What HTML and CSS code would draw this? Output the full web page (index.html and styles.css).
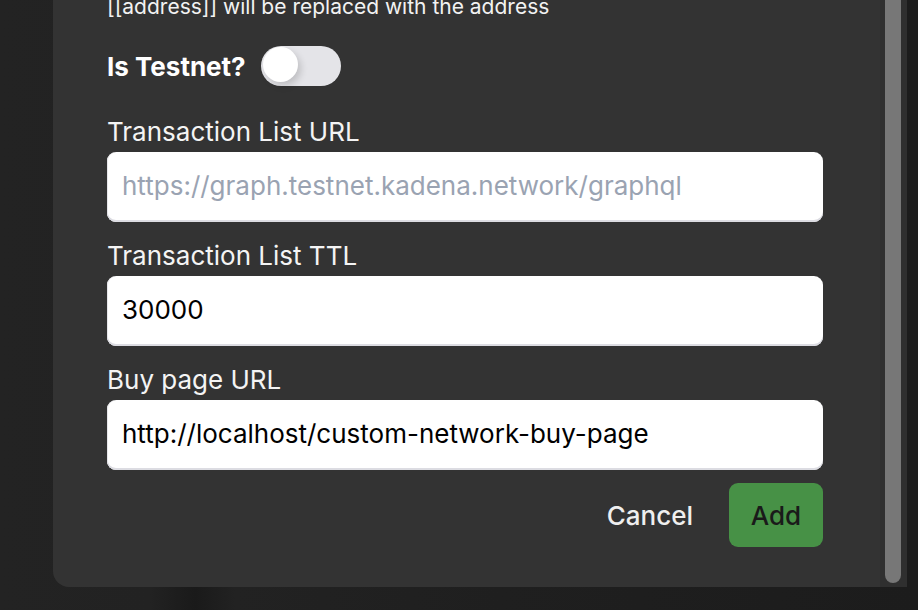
FILE: index.html
```html
<!DOCTYPE html>
<html lang="en">
<head>
<meta charset="utf-8">
<title>Add network</title>
<link rel="stylesheet" href="styles.css">
</head>
<body>
<div class="backdrop">
  <div class="modal">
    <form class="content">
      <p class="hint">[[address]] will be replaced with the address</p>
      <div class="toggle-row">
        <span class="toggle-label">Is Testnet?</span>
        <span class="switch"><span class="knob"></span></span>
      </div>
      <label class="field">
        <span class="label">Transaction List URL</span>
        <input class="input" type="text" placeholder="https://graph.testnet.kadena.network/graphql">
      </label>
      <label class="field">
        <span class="label">Transaction List TTL</span>
        <input class="input" type="text" value="30000">
      </label>
      <label class="field">
        <span class="label">Buy page URL</span>
        <input class="input" type="text" value="http://localhost/custom-network-buy-page">
      </label>
      <div class="actions">
        <button type="button" class="btn-cancel">Cancel</button>
        <button type="button" class="btn-add">Add</button>
      </div>
    </form>
    <div class="scrolltrack"><div class="thumb"></div></div>
  </div>
</div>
</body>
</html>
```
FILE: styles.css
```css
* { box-sizing: border-box; }
html, body {
  margin: 0;
  height: 610px;
  overflow: hidden;
  background: #1f1f1f;
  font-family: Inter, "Noto Sans", "Liberation Sans", sans-serif;
}
.backdrop {
  height: 610px;
  display: flex;
  align-items: flex-start;
  background: linear-gradient(to right, #232323 0, #222 150px, #1a1a1a 195px, #222 235px, #1f1f1f 500px, #1c1c1c 918px);
}
.modal {
  margin-left: 53px;
  margin-top: -7px;
  width: 854px;
  height: 594px;
  background: #333;
  border-bottom-left-radius: 16px;
  display: flex;
}
.content {
  flex: 1;
  padding: 0 57px 0 54px;
  display: flex;
  flex-direction: column;
  margin: 0;
}
.hint {
  margin: 0;
  color: #f2f2f2;
  font-size: 21px;
  line-height: 28px;
  white-space: nowrap;
}
.toggle-row {
  margin-top: 25px;
  display: flex;
  align-items: center;
  gap: 15px;
  height: 40px;
}
.toggle-label {
  color: #fff;
  font-weight: 700;
  font-size: 26px;
}
.switch {
  width: 80px;
  height: 40px;
  border-radius: 20px;
  background: #e4e4e8;
  padding: 1px 2px;
  display: flex;
}
.knob {
  width: 35px;
  height: 35px;
  border-radius: 50%;
  background: #fff;
  box-shadow: 3px 4px 7px rgba(0,0,0,0.16);
}
.field {
  display: flex;
  flex-direction: column;
  margin-top: 19px;
}
.toggle-row + .field { margin-top: 31px; }
.label {
  color: #f4f4f4;
  font-size: 26px;
  line-height: 30px;
  margin-bottom: 5px;
}
.input {
  height: 70px;
  border: none;
  border-radius: 9px;
  box-shadow: inset 0 -2px 0 #dcdce2, inset 1px 0 0 #e6e6ea;
  background: #fff;
  padding: 0 15px 3px;
  font-family: Inter, "Noto Sans", sans-serif;
  font-size: 26px;
  color: #000;
  outline: none;
}
.input::placeholder { color: #9aa3b2; }
.actions {
  margin-top: 13px;
  display: flex;
  justify-content: flex-end;
  align-items: center;
  gap: 20px;
}
.btn-cancel, .btn-add {
  font-family: Inter, "Noto Sans", sans-serif;
  font-size: 26px;
  font-weight: 500;
  border: none;
  height: 64px;
  cursor: pointer;
}
.btn-cancel {
  background: transparent;
  color: #efefef;
  padding: 0 16px;
}
.btn-add {
  width: 94px;
  background: #479146;
  color: #1a1a1a;
  border-radius: 9px;
}
.scrolltrack {
  width: 27px;
  background: #2f2f2f;
  padding: 0 6px 4px 5px;
  display: flex;
}
.thumb {
  width: 16px;
  flex: 1;
  background: #777;
  border-radius: 8px;
}
```
